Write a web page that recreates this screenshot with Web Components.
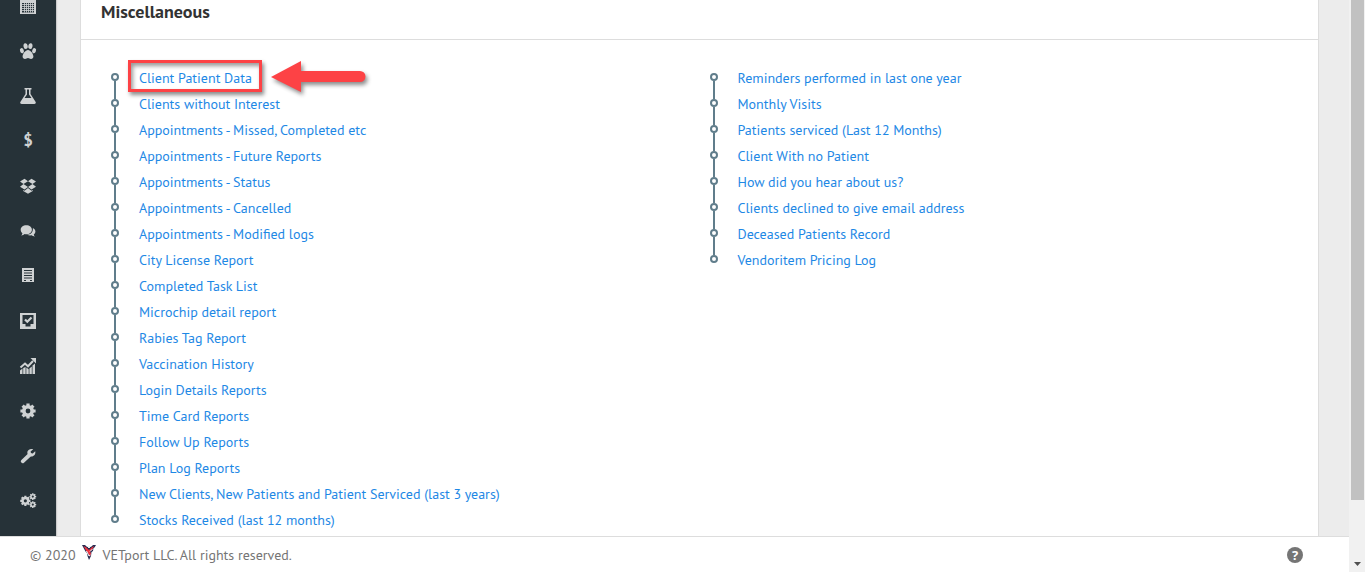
<!DOCTYPE html>
<html lang="en">
<head>
<meta charset="utf-8">
<title>VETport - Reports</title>
<style>
    html, body {
        margin: 0;
        height: 100%;
        overflow: hidden;
    }
    body {
        font-family: "PT Sans", "Noto Sans", sans-serif;
        font-size: 14px;
        line-height: 20px;
        color: #333;
        background: #ececec;
    }
</style>
</head>
<body>
<vp-app>
    <vp-sidebar slot="sidebar"></vp-sidebar>
    <vp-panel heading="Miscellaneous">
        <vp-timeline>
            <vp-entry marked>Client Patient Data</vp-entry>
            <vp-entry>Clients without Interest</vp-entry>
            <vp-entry>Appointments - Missed, Completed etc</vp-entry>
            <vp-entry>Appointments - Future Reports</vp-entry>
            <vp-entry>Appointments - Status</vp-entry>
            <vp-entry>Appointments - Cancelled</vp-entry>
            <vp-entry>Appointments - Modified logs</vp-entry>
            <vp-entry>City License Report</vp-entry>
            <vp-entry>Completed Task List</vp-entry>
            <vp-entry>Microchip detail report</vp-entry>
            <vp-entry>Rabies Tag Report</vp-entry>
            <vp-entry>Vaccination History</vp-entry>
            <vp-entry>Login Details Reports</vp-entry>
            <vp-entry>Time Card Reports</vp-entry>
            <vp-entry>Follow Up Reports</vp-entry>
            <vp-entry>Plan Log Reports</vp-entry>
            <vp-entry>New Clients, New Patients and Patient Serviced (last 3 years)</vp-entry>
            <vp-entry>Stocks Received (last 12 months)</vp-entry>
        </vp-timeline>
        <vp-timeline>
            <vp-entry>Reminders performed in last one year</vp-entry>
            <vp-entry>Monthly Visits</vp-entry>
            <vp-entry>Patients serviced (Last 12 Months)</vp-entry>
            <vp-entry>Client With no Patient</vp-entry>
            <vp-entry>How did you hear about us?</vp-entry>
            <vp-entry>Clients declined to give email address</vp-entry>
            <vp-entry>Deceased Patients Record</vp-entry>
            <vp-entry>Vendoritem Pricing Log</vp-entry>
        </vp-timeline>
    </vp-panel>
    <vp-footer slot="footer"></vp-footer>
    <vp-scrollbar slot="scrollbar"></vp-scrollbar>
</vp-app>

<script>
/**
 * Base element: attaches an open shadow root and fills it
 */
class VpElement extends HTMLElement {
    constructor() {
        super();
        this.attachShadow({ mode: 'open' });
    }

    connectedCallback() {
        this.shadowRoot.innerHTML = this.template();
    }
}

// Page shell: menu and content on top, footer below, scrollbar at the right
class VpApp extends VpElement {
    template() {
        return `
            <style>
                :host { display: flex; height: 100vh; }
                .page { flex: 1; min-width: 0; display: flex; flex-direction: column; }
                .body { flex: 1; min-height: 0; display: flex; overflow: hidden; }
                main { flex: 1; min-width: 0; padding: 0 30px 0 24px; }
            </style>
            <div class="page">
                <div class="body">
                    <slot name="sidebar"></slot>
                    <main><slot></slot></main>
                </div>
                <slot name="footer"></slot>
            </div>
            <slot name="scrollbar"></slot>
        `;
    }
}

const GEAR = `
    <circle cx="8" cy="8" r="4.200" fill="none" stroke="currentColor" stroke-width="3.600"/>
    <g stroke="currentColor" stroke-width="3.200">
        <path d="M8 .4v3M8 12.600v3M.4 8h3M12.600 8h3M2.600 2.600l2.100 2.100M11.300 11.300l2.100 2.100M13.400 2.600l-2.100 2.100M4.700 11.300l-2.100 2.100"/>
    </g>`;

const ICONS = [
    ['Calendar', `<path fill-rule="evenodd" d="M0 2h2V0h2v2h8V0h2v2h2v14H0zM2 5v9.500h12V5z"/>
        <path d="M2 6.500h12M2 8.500h12M2 10.500h12M2 12.500h12M4.500 5v9.500M6.500 5v9.500M8.500 5v9.500M10.500 5v9.500M12.500 5v9.500" stroke="currentColor" stroke-width=".8"/>`],
    ['Patients', `<ellipse cx="1.900" cy="7.700" rx="1.900" ry="2.600" transform="rotate(-20 1.900 7.700)"/>
        <ellipse cx="5.600" cy="3.100" rx="2.100" ry="2.900" transform="rotate(-8 5.600 3.100)"/>
        <ellipse cx="10.400" cy="3.100" rx="2.100" ry="2.900" transform="rotate(8 10.400 3.100)"/>
        <ellipse cx="14.100" cy="7.700" rx="1.900" ry="2.600" transform="rotate(20 14.100 7.700)"/>
        <path d="M8 7c2.600 0 5.400 4 5.400 6.500 0 1.600-1 2.400-2.400 2.400-1.200 0-1.900-.9-3-.9s-1.800.9-3 .9c-1.400 0-2.400-.8-2.400-2.400C2.600 11 5.400 7 8 7z"/>`],
    ['Laboratory', `<path fill-rule="evenodd" d="M4.500 0h7v1.500h-1V6l5 7.700c.8 1.200.1 2.300-1.300 2.300H1.800C.4 16-.3 14.900.5 13.700l5-7.700V1.500h-1zM7 1.500v5L4.500 10h7L9 6.500v-5z"/>`],
    ['Billing', `<text x="8" y="13" text-anchor="middle" font-family="PT Sans, sans-serif" font-size="17" font-weight="700">$</text>`],
    ['Inventory', `<path d="M4.500.8L8 3.200 3.500 6 0 3.400zM11.500.8L16 3.400 12.500 6 8 3.200zM0 8.800L3.500 6 8 9l-3.500 2.600zM12.500 6L16 8.800l-4.500 2.800L8 9zM3.200 12l1.300.8L8 10l3.500 2.800 1.300-.8v1L8 15.800 3.200 13z"/>`],
    ['Messages', `<path d="M6.300 2.300c3.300 0 5.600 2 5.600 4.500s-2.300 4.500-5.600 4.500c-.6 0-1.100-.1-1.600-.2-1 .8-2 1.200-3.500 1.300.7-.6 1.100-1.300 1.200-2.200C1.300 9.400.7 8.200.7 6.800c0-2.500 2.300-4.500 5.600-4.500z"/>
        <path d="M12.900 5c1.600.8 2.500 2 2.500 3.500 0 1.200-.6 2.200-1.600 2.900.1.800.5 1.500 1.200 2.100-1.500-.1-2.500-.5-3.400-1.200-1.600.3-3.200 0-4.300-.6 3.200-.1 5.900-2.300 5.600-6.700z"/>`],
    ['Records', `<path fill-rule="evenodd" d="M2 0h12v14h-12zM4 2v1h8V2zm0 2.500v1h8v-1zM4 7v1h8V7zm0 2.500v1h8v-1zM4 12v1h2v-1zm6 0v1h2v-1z"/>`],
    ['Tasks', `<path fill-rule="evenodd" d="M0 0h16v16H0zM2.500 2v9h3v2.500h5V11h3V2z"/>
        <path d="M5 6.500l2.300 2.300L11.500 4.500" fill="none" stroke="currentColor" stroke-width="2.200"/>`],
    ['Reports', `<path d="M0 12.500l2.500-2V16H0zM3.200 10l2.400-1v7H3.200zM6.300 9.500l2.400 1.700V16H6.300zM9.400 10.500l2.400-2V16H9.400zM12.500 7.500l2.500-2V16h-2.500z"/>
        <path d="M.5 9.500L5 5.500l3 2.800 5-5.300" fill="none" stroke="currentColor" stroke-width="2"/>
        <path d="M10.500 0H16v5.500z"/>`],
    ['Settings', GEAR],
    ['Tools', `<path d="M2.700 13.300L10 6.500" stroke="currentColor" stroke-width="3.800" stroke-linecap="round"/>
        <path d="M13.200 1.200L10.600 3.600l.3 1.700 1.800.3 2.500-2.400c.7 2.800-1.200 5.300-3.800 5.300-2.500 0-4.300-2-4.100-4.200C7.500 2 10.400.1 13.200 1.200z"/>`],
    ['Administration', `<g transform="translate(0 2.500) scale(.67)">${GEAR}</g>
        <g transform="translate(9.200 0) scale(.45)">${GEAR}</g>
        <g transform="translate(9.200 8) scale(.45)">${GEAR}</g>`]
];

// Icon menu, kept at its scrolled-down position
class VpSidebar extends VpElement {
    template() {
        return `
            <style>
                :host { display: flex; flex: none; width: 56px; background: #263238; box-shadow: 1px 0 1px #ccc; }
                nav { flex: 1; display: flex; flex-direction: column; justify-content: flex-end; padding-bottom: 13px; }
                a { flex: none; height: 45px; display: flex; align-items: center; justify-content: center; color: #cfd2d3; }
                svg { width: 16px; height: 16px; overflow: visible; fill: currentColor; }
            </style>
            <nav aria-label="Main menu">
                ${ICONS.map(([label, shape]) => `
                    <a href="#" aria-label="${label}"><svg viewBox="0 0 16 16" aria-hidden="true">${shape}</svg></a>
                `).join('')}
            </nav>
        `;
    }
}

class VpPanel extends VpElement {
    template() {
        return `
            <style>
                :host { display: block; min-height: 100%; box-sizing: border-box; background: #fff; border: 1px solid #ddd; border-width: 0 1px; }
                header { padding: 0 20px 16px; border-bottom: 1px solid #ddd; }
                h2 { margin: 0; font-size: 18px; line-height: 23px; font-weight: 600; color: #333; }
                .columns { display: grid; grid-template-columns: 1fr 1fr; align-items: start; padding: 25px 20px; }
            </style>
            <header><h2>${this.getAttribute('heading')}</h2></header>
            <div class="columns"><slot></slot></div>
        `;
    }
}

class VpTimeline extends VpElement {
    connectedCallback() {
        super.connectedCallback();
        this.setAttribute('role', 'list');
    }

    template() {
        return `
            <style>
                :host { display: block; min-width: 0; }
            </style>
            <slot></slot>
        `;
    }
}

// One report link with its dot; "marked" adds the red frame and the arrow
class VpEntry extends VpElement {
    connectedCallback() {
        super.connectedCallback();
        this.setAttribute('role', 'listitem');
    }

    template() {
        const callout = `
            <span class="frame"></span>
            <svg class="arrow" viewBox="0 0 96 32" aria-hidden="true">
                <path d="M0 16L30 0v10h59a5 5 0 0 1 0 11H30v10z" fill="#fd4245"/>
            </svg>
        `;
        return `
            <style>
                :host { display: flex; height: 26px; gap: 20px; padding-left: 10px; }
                .rail { flex: none; width: 8px; display: flex; flex-direction: column; align-items: center; padding-top: 8px; box-sizing: border-box; }
                .rail i { flex: none; box-sizing: border-box; width: 8px; height: 8px; border: 2px solid #607d8b; border-radius: 50%; }
                .rail::after { content: ""; flex: none; width: 2px; height: 18px; background: #607d8b; }
                :host(:last-child) .rail::after { display: none; }
                .label { position: relative; height: 26px; line-height: 26px; white-space: nowrap; }
                a { color: #1e88e5; text-decoration: none; }
                .frame { position: absolute; inset: -5px -10px -1px -11px; border: 3px solid #fd4245; box-shadow: 2px 3px 4px rgba(0, 0, 0, .45), inset 2px 3px 4px rgba(0, 0, 0, .4); pointer-events: none; }
                .arrow { position: absolute; left: 100%; top: -4px; margin-left: 19px; width: 96px; height: 32px; overflow: visible; filter: drop-shadow(2px 3px 2px rgba(0, 0, 0, .45)); }
            </style>
            <span class="rail"><i></i></span>
            <span class="label"><a href="#"><slot></slot></a>${this.hasAttribute('marked') ? callout : ''}</span>
        `;
    }
}

class VpFooter extends VpElement {
    template() {
        return `
            <style>
                :host { display: block; flex: none; position: relative; background: #fff; border-top: 1px solid #ddd; color: #757575; }
                footer { display: flex; align-items: center; height: 35px; padding: 0 46px 0 30px; }
                .logo { width: 14px; height: 15px; margin: 0 7px 4px 6px; }
                .owner { flex: 1; }
                button { width: 16px; height: 16px; padding: 0; border: 0; border-radius: 50%; background: #757575; color: #fff; font: 700 13px/16px "Noto Sans", sans-serif; }
            </style>
            <footer>
                <span>© 2020</span>
                <svg class="logo" viewBox="0 0 14 15" aria-hidden="true">
                    <path d="M0 0h3l1.500 1.500L7 2l2.500-.5L11 0h3l-1.500 2.500-1 .5-.5 3-1.500 1-.5 4L7 15l-1.500-4L5 8 3.500 6.500z" fill="#252b50"/>
                    <path d="M1.500 1l3 1.500L7 5l2.500-2.500L12 1l-1.500 3L8 6.500 9 8.500 8 11.500 6.500 9 4 5.500z" fill="#ea3440"/>
                    <path d="M4.500 0L7 3l2.500-3M10.500 4L8 6.500M4.500 6l2.500 5 1.500-1" fill="none" stroke="#fff" stroke-width="1"/>
                </svg>
                <span class="owner">VETport LLC. All rights reserved.</span>
                <button type="button" aria-label="Help">?</button>
            </footer>
        `;
    }
}

class VpScrollbar extends VpElement {
    template() {
        return `
            <style>
                :host { display: flex; flex: none; flex-direction: column; align-items: center; width: 16px; background: #f1f1f1; }
                .thumb { flex: 500; width: 13px; background: #c1c1c1; }
                .rest { flex: 55; }
                svg { flex: none; width: 16px; height: 17px; }
            </style>
            <span class="thumb"></span>
            <span class="rest"></span>
            <svg viewBox="0 0 16 17" aria-hidden="true"><path d="M5 7h7l-3.500 4z" fill="#505050"/></svg>
        `;
    }
}

customElements.define('vp-app', VpApp);
customElements.define('vp-sidebar', VpSidebar);
customElements.define('vp-panel', VpPanel);
customElements.define('vp-timeline', VpTimeline);
customElements.define('vp-entry', VpEntry);
customElements.define('vp-footer', VpFooter);
customElements.define('vp-scrollbar', VpScrollbar);
</script>
</body>
</html>
